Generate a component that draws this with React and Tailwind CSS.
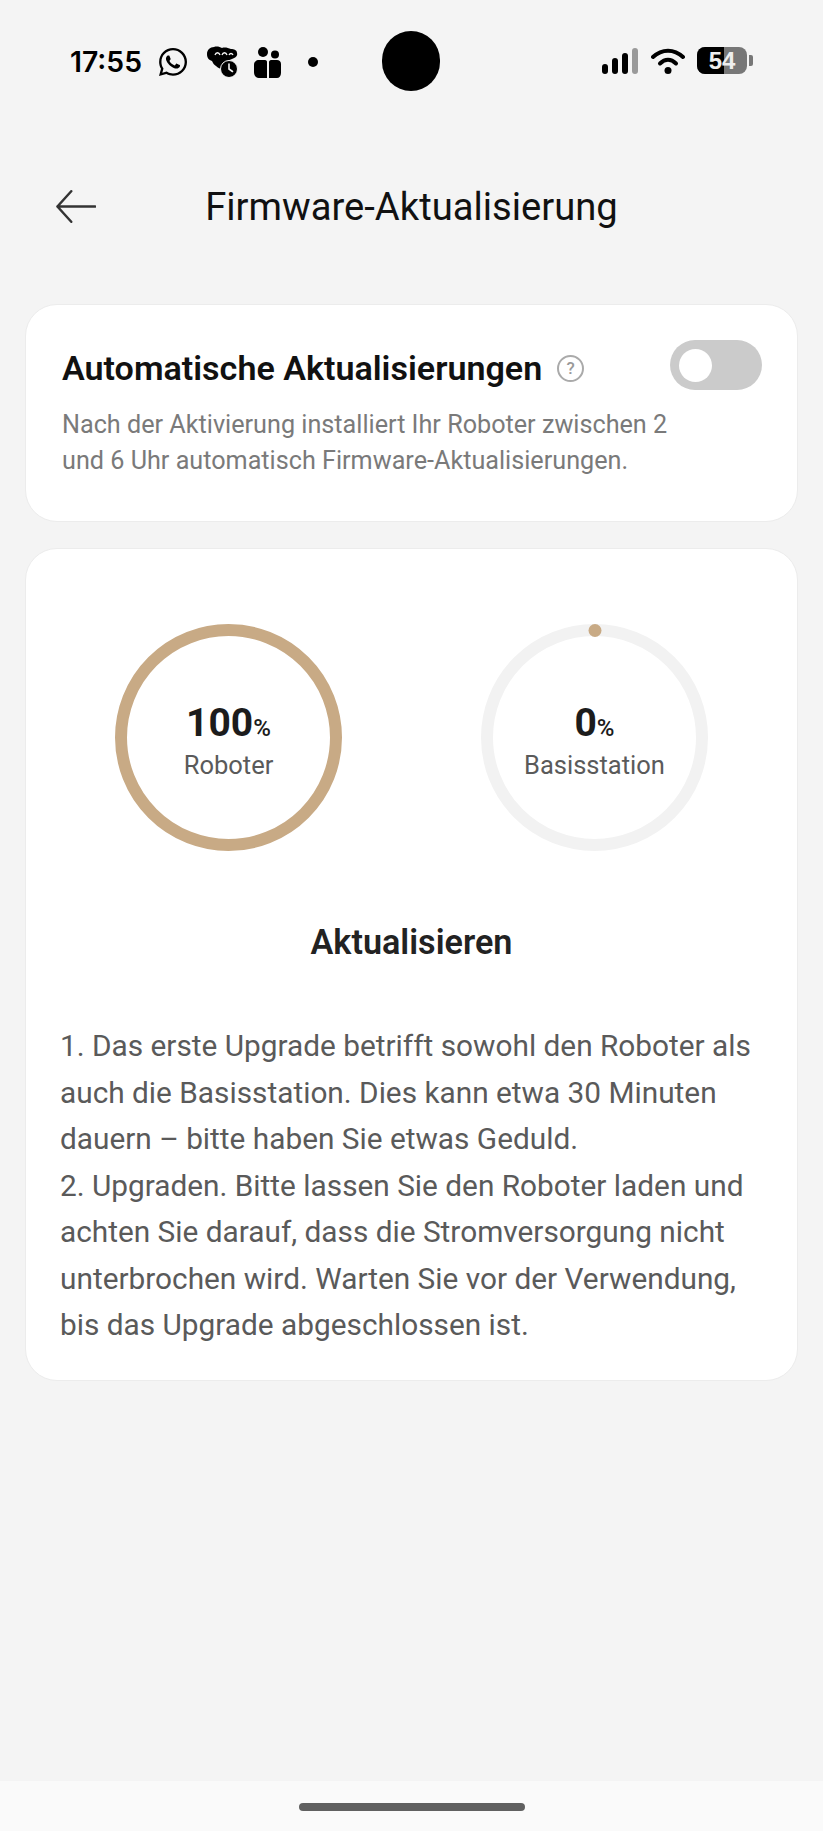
import React from "react";
import { FaWhatsapp } from "react-icons/fa";

function CreatureIcon() {
  return (
    <svg width="32" height="32" viewBox="0 0 32 32" className="ml-[17px]">
      <path d="M1 8c0-4 3-7 7-7 3-1 6 0 8 1 3-1 6 0 9 1 3 0 6 1 6 4 1 3-2 5-5 6l-5 2c-2 2-3 4-2 8-3 1-7-1-9-3-2-1-3-3-4-5-3-1-5-3-5-7z" fill="#000" />
      <path d="M9 9c1-3 4-3 5 0M16 9c1-3 4-3 5 0M23 9c1-2 3-2 4 0" fill="none" stroke="#f4f4f4" strokeWidth="1.300" />
      <circle cx="23" cy="23" r="8.500" fill="#000" stroke="#f4f4f4" strokeWidth="1" />
      <path d="M23 18v5l3.500 2.500" fill="none" stroke="#f4f4f4" strokeWidth="1.600" strokeLinecap="round" />
    </svg>
  );
}

function PeopleIcon() {
  return (
    <svg width="27" height="31" viewBox="0 0 27 31" className="ml-[16px]">
      <circle cx="9" cy="5" r="5" fill="#000" />
      <circle cx="21" cy="7.500" r="4" fill="#000" />
      <path d="M0 18c0-3 2-5 5-5h6c1.500 0 2 1 2 2v16H6c-4 0-6-2-6-6z" fill="#000" />
      <path d="M15 15c0-1 1-2 2-2h6c2 0 4 1.500 4 4v9c0 3-2 5-4 5h-8z" fill="#000" />
    </svg>
  );
}

function SignalIcon() {
  return (
    <svg width="36" height="26" viewBox="0 0 36 26">
      <rect x="0" y="16" width="6" height="10" rx="3" fill="#000" />
      <rect x="10" y="10" width="6" height="16" rx="3" fill="#000" />
      <rect x="20" y="5" width="6" height="21" rx="3" fill="#000" />
      <rect x="30" y="0" width="6" height="26" rx="3" fill="#999" />
    </svg>
  );
}

function WifiIcon() {
  return (
    <svg width="34" height="26" viewBox="0 0 34 26" className="ml-[13px]">
      <path d="M2 9c9-8.500 21-8.500 30 0" fill="none" stroke="#000" strokeWidth="4" strokeLinecap="round" />
      <path d="M9 15.500c5-5 11-5 16 0" fill="none" stroke="#000" strokeWidth="4" strokeLinecap="round" />
      <circle cx="17" cy="22.500" r="3.500" fill="#000" />
    </svg>
  );
}

function Battery() {
  return (
    <div className="ml-[12px] flex items-center">
      <div className="relative flex h-[27px] w-[50px] items-center justify-center overflow-hidden rounded-[8px] bg-[#777]">
        <div className="absolute inset-y-0 left-0 w-[27px] bg-black" />
        <span className="relative text-[24px] font-bold leading-none text-[#eee] font-['Liberation_Sans',sans-serif]">54</span>
      </div>
      <div className="ml-[2px] h-[11px] w-[4px] rounded-r-[2px] bg-[#777]" />
    </div>
  );
}

function Ring({ value, label, full }) {
  return (
    <div className={`relative flex h-[227px] w-[227px] flex-col items-center rounded-full border-[12px] pt-[65px] ${full ? "border-[#c8aa85]" : "border-[#f2f2f2]"}`}>
      {!full && <div className="absolute top-[-12px] left-1/2 h-[13px] w-[13px] -translate-x-1/2 rounded-full bg-[#c8aa85]" />}
      <div className="flex items-baseline leading-[44px] text-[#1c1c1c]">
        <span className="text-[39px] font-bold">{value}</span>
        <span className="text-[24px] font-medium">%</span>
      </div>
      <div className="mt-[-2px] text-[25.500px] leading-[34px] text-[#5a5a5a]">{label}</div>
    </div>
  );
}

export default function App() {
  return (
    <div className="flex min-h-[1831px] flex-col bg-[#f4f4f4] font-[Roboto,sans-serif]">
      {/* status bar */}
      <div className="relative flex h-[124px] items-start justify-between pt-[46px] pr-[70px] pl-[70px]">
        <div className="flex items-center">
          <span className="text-[28.300px] font-semibold leading-[31px] text-black font-[Inter,sans-serif]">17:55</span>
          <FaWhatsapp className="ml-[15px] text-[32px] text-black" />
          <CreatureIcon />
          <PeopleIcon />
          <div className="ml-[27px] h-[10px] w-[10px] rounded-full bg-black" />
        </div>
        <div className="flex items-center pt-[1px]">
          <SignalIcon />
          <WifiIcon />
          <Battery />
        </div>
        <div className="absolute top-[31px] left-[382px] h-[60px] w-[58px] rounded-full bg-black" />
      </div>

      {/* header */}
      <div className="relative flex h-[180px] items-start justify-center pt-[58px]">
        <svg width="40" height="33" viewBox="0 0 42 34" className="absolute top-[66px] left-[56px]">
          <path d="M16 1L1.500 17L16 33M1.500 17H41" fill="none" stroke="#333" strokeWidth="2.600" strokeLinecap="round" strokeLinejoin="round" />
        </svg>
        <h1 className="text-[38.200px] leading-[50px] text-[#111]">Firmware-Aktualisierung</h1>
      </div>

      {/* auto update card */}
      <div className="mx-[25px] h-[218px] rounded-[32px] border border-[#ececec] bg-white pt-[35px] pr-[35px] pl-[36px]">
        <div className="flex items-start justify-between">
          <div className="flex items-center pt-[7px]">
            <span className="text-[34.100px] font-semibold leading-[42px] text-[#111]">Automatische Aktualisierungen</span>
            <div className="ml-[15px] flex h-[27px] w-[27px] items-center justify-center rounded-full border-2 border-[#aaa] text-[17px] font-medium leading-none text-[#999]">?</div>
          </div>
          <div className="flex h-[50px] w-[92px] items-center rounded-full bg-[#cbcbcb] pl-[9px]">
            <div className="h-[33px] w-[33px] rounded-full bg-white" />
          </div>
        </div>
        <p className="mt-[17px] text-[25.200px] leading-[36px] text-[#7a7a7a]">
          Nach der Aktivierung installiert Ihr Roboter zwischen 2
          <br />
          und 6 Uhr automatisch Firmware-Aktualisierungen.
        </p>
      </div>

      {/* progress card */}
      <div className="mx-[25px] mt-[26px] h-[833px] rounded-[32px] border border-[#ececec] bg-white pt-[75px]">
        <div className="flex justify-between pr-[89px] pl-[89px]">
          <Ring value="100" label="Roboter" full />
          <Ring value="0" label="Basisstation" />
        </div>
        <h2 className="mt-[69px] text-center text-[34.200px] font-semibold leading-[44px] text-[#222]">Aktualisieren</h2>
        <p className="mt-[59px] pl-[34px] text-[29.800px] leading-[46.500px] text-[#5a5a5a]">
          1. Das erste Upgrade betrifft sowohl den Roboter als
          <br />
          auch die Basisstation. Dies kann etwa 30 Minuten
          <br />
          dauern – bitte haben Sie etwas Geduld.
          <br />
          2. Upgraden. Bitte lassen Sie den Roboter laden und
          <br />
          achten Sie darauf, dass die Stromversorgung nicht
          <br />
          unterbrochen wird. Warten Sie vor der Verwendung,
          <br />
          bis das Upgrade abgeschlossen ist.
        </p>
      </div>

      <div className="flex-1" />

      {/* gesture bar */}
      <div className="flex h-[50px] justify-center bg-[#fafafa] pt-[22px]">
        <div className="h-[8px] w-[226px] rounded-full bg-[#606060]" />
      </div>
    </div>
  );
}
